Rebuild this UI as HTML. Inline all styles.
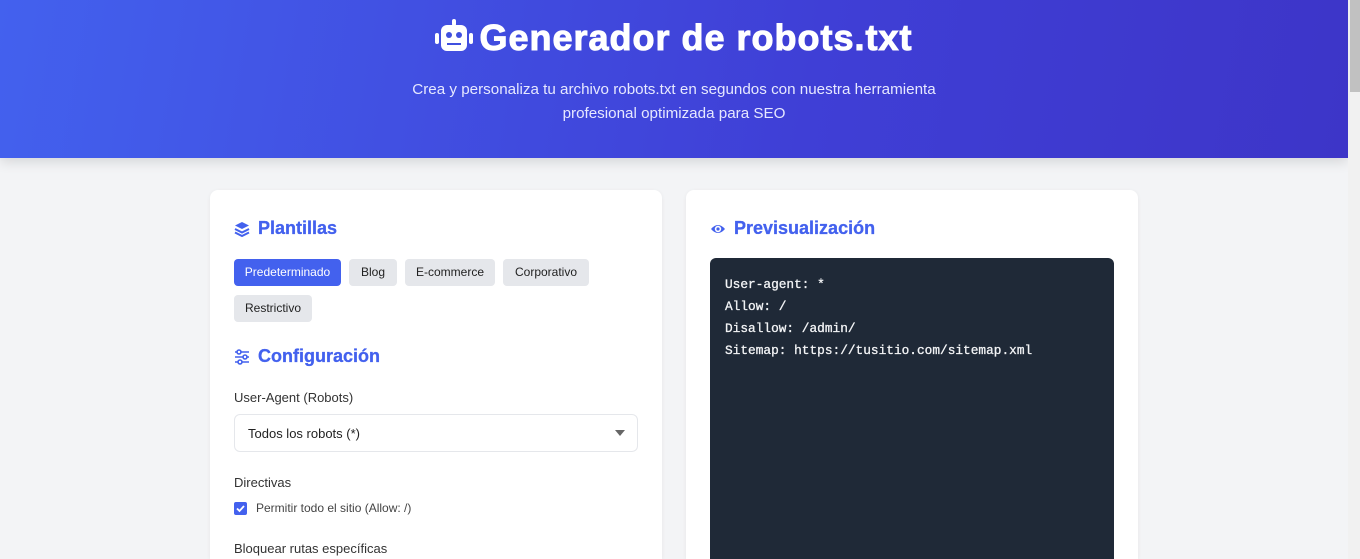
<!DOCTYPE html>
<html><head><meta charset="utf-8"><style>
*{box-sizing:border-box;margin:0;padding:0}
html,body{width:1360px;height:559px;overflow:hidden}
body{background:#f3f4f6;font-family:"Liberation Sans",sans-serif;position:relative}
.hdr{position:absolute;left:0;top:0;width:1348px;height:158px;background:linear-gradient(100deg,#4361ee 0%,#3f3fd6 60%,#3d35c8 100%);box-shadow:0 4px 12px rgba(0,0,0,.12);color:#fff;text-align:center}
.hdr h1{position:absolute;top:14px;left:0;width:100%;font-size:36px;font-weight:bold;line-height:48px;letter-spacing:1px;-webkit-text-stroke:1px #fff}
.hdr p{position:absolute;top:78px;left:0;width:100%;font-size:15.2px;line-height:24px;color:#e6e8ff}
.sb{position:absolute;left:1348px;top:0;width:12px;height:559px;background:#f1f1f1}
.sb div{position:absolute;left:2px;top:0;width:10px;height:92px;background:#c1c1c1}
.card{position:absolute;top:190px;width:452px;height:369px;background:#fff;border-radius:8px 8px 0 0;box-shadow:0 1px 4px rgba(0,0,0,.06);overflow:hidden}
.h2{position:absolute;font-size:18px;font-weight:bold;color:#4361ee;display:flex;align-items:center;gap:8px;-webkit-text-stroke:.3px #4361ee}
.btn{position:absolute;height:27px;line-height:27px;font-size:12px;border-radius:4px;background:#e5e7eb;color:#222;text-align:center}
.lbl{position:absolute;font-size:13px;color:#333}
.code{position:absolute;left:24px;top:68px;width:404px;height:301px;background:#1f2937;border-radius:6px 6px 0 0;padding:16px 15px;font-family:"Liberation Mono",monospace;font-size:12.8px;line-height:22px;color:#f3f4f6;-webkit-text-stroke:.3px #f3f4f6}
</style></head><body>
<div class="hdr">
<h1><svg width="38" height="36" viewBox="0 0 38 36" style="vertical-align:-4px;margin-right:6px"><rect x="17" y="1" width="4" height="7" rx="2" fill="#fff"/><rect x="6" y="7" width="26" height="26" rx="6" fill="#fff"/><rect x="0" y="15" width="4" height="11" rx="2" fill="#fff"/><rect x="34" y="15" width="4" height="11" rx="2" fill="#fff"/><circle cx="14" cy="17" r="3" fill="#4050df"/><circle cx="24" cy="17" r="3" fill="#4050df"/><rect x="12" y="25" width="14" height="2" fill="#4050df"/></svg>Generador de robots.txt</h1>
<p>Crea y personaliza tu archivo robots.txt en segundos con nuestra herramienta<br>profesional optimizada para SEO</p>
</div>
<div class="sb"><div></div></div>
<div class="card" style="left:210px">
<div class="h2" style="left:24px;top:28px"><svg width="16" height="16" viewBox="0 0 16 16"><path d="M8 1L1 4.5 8 8l7-3.5z" fill="#4361ee"/><path d="M1 8l7 3.5L15 8" stroke="#4361ee" stroke-width="2" fill="none"/><path d="M1 11.5L8 15l7-3.5" stroke="#4361ee" stroke-width="2" fill="none"/></svg>Plantillas</div>
<div class="btn" style="left:24px;top:69px;width:107px;background:#4361ee;color:#fff">Predeterminado</div>
<div class="btn" style="left:139px;top:69px;width:48px">Blog</div>
<div class="btn" style="left:195px;top:69px;width:90px">E-commerce</div>
<div class="btn" style="left:293px;top:69px;width:86px">Corporativo</div>
<div class="btn" style="left:24px;top:105px;width:78px">Restrictivo</div>
<div class="h2" style="left:24px;top:156px"><svg width="16" height="16" viewBox="0 0 16 16" stroke="#4361ee" stroke-width="1.6" fill="none"><path d="M1 3h14M1 8h14M1 13h14"/><circle cx="5" cy="3" r="2" fill="#fff"/><circle cx="11" cy="8" r="2" fill="#fff"/><circle cx="6" cy="13" r="2" fill="#fff"/></svg>Configuración</div>
<div class="lbl" style="left:24px;top:200px">User-Agent (Robots)</div>
<div style="position:absolute;left:24px;top:224px;width:404px;height:38px;border:1px solid #e5e7eb;border-radius:6px;font-size:13px;line-height:38px;padding-left:13px;color:#222">Todos los robots (*)<span style="position:absolute;right:12px;top:15px;border-left:5px solid transparent;border-right:5px solid transparent;border-top:6px solid #666"></span></div>
<div class="lbl" style="left:24px;top:285px">Directivas</div>
<div style="position:absolute;left:24px;top:312px;width:13px;height:13px;background:#4361ee;border-radius:2px"><svg width="13" height="13" viewBox="0 0 13 13"><path d="M3 6.5l2.5 2.5L10 4" stroke="#fff" stroke-width="1.8" fill="none"/></svg></div>
<div class="lbl" style="left:46px;top:311px;font-size:12px;color:#444">Permitir todo el sitio (Allow: /)</div>
<div class="lbl" style="left:24px;top:351px">Bloquear rutas específicas</div>
</div>
<div class="card" style="left:686px">
<div class="h2" style="left:24px;top:28px"><svg width="16" height="16" viewBox="0 0 16 16"><path d="M1 8Q8 0 15 8Q8 16 1 8z" fill="#4361ee"/><circle cx="8" cy="8" r="3.2" fill="#fff"/><circle cx="8" cy="8" r="1.6" fill="#4361ee"/></svg>Previsualización</div>
<div class="code">User-agent: *<br>Allow: /<br>Disallow: /admin/<br>Sitemap: https://tusitio.com/sitemap.xml</div>
</div>
</body></html>
